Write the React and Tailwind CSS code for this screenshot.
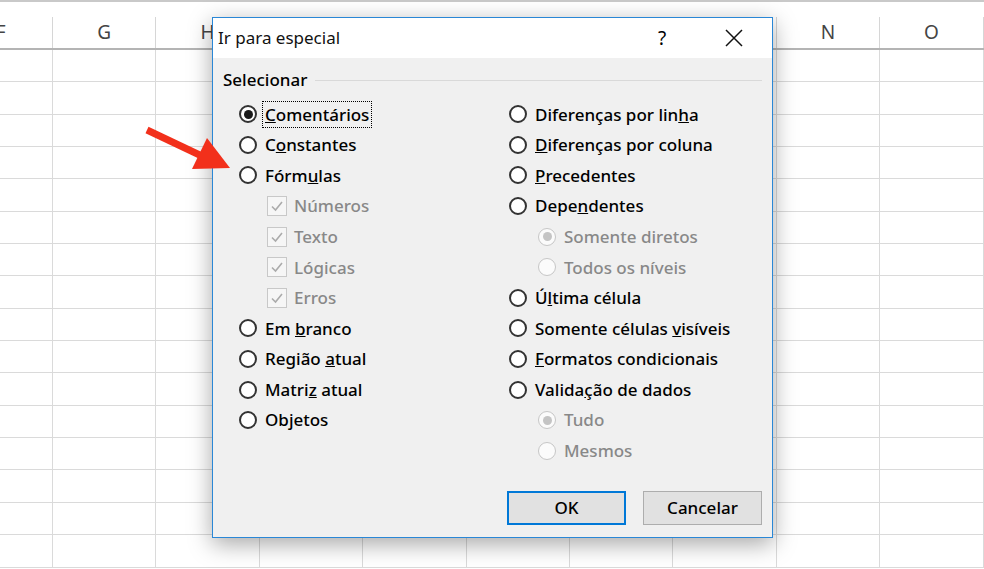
import { Fragment } from "react";

const cols = ["F", "G", "H", "I", "J", "K", "L", "M", "N", "O"];

const leftItems = [
    { kind: "radio", label: <><u>C</u>omentários</>, checked: true, focus: true },
    { kind: "radio", label: <>C<u>o</u>nstantes</> },
    { kind: "radio", label: <>Fórm<u>u</u>las</> },
    { kind: "check", label: "Números" },
    { kind: "check", label: "Texto" },
    { kind: "check", label: "Lógicas" },
    { kind: "check", label: "Erros" },
    { kind: "radio", label: <>Em <u>b</u>ranco</> },
    { kind: "radio", label: <>Região <u>a</u>tual</> },
    { kind: "radio", label: <>Matri<u>z</u> atual</> },
    { kind: "radio", label: <>Ob<u>j</u>etos</> },
];

const rightItems = [
    { kind: "radio", label: <>Diferenças por lin<u>h</u>a</> },
    { kind: "radio", label: <><u>D</u>iferenças por coluna</> },
    { kind: "radio", label: <><u>P</u>recedentes</> },
    { kind: "radio", label: <>Depe<u>n</u>dentes</> },
    { kind: "subradio", label: "Somente diretos", checked: true },
    { kind: "subradio", label: "Todos os níveis" },
    { kind: "radio", label: <>Ú<u>l</u>tima célula</> },
    { kind: "radio", label: <>Somente células <u>v</u>isíveis</> },
    { kind: "radio", label: <><u>F</u>ormatos condicionais</> },
    { kind: "radio", label: <>Valida<u>ç</u>ão de dados</> },
    { kind: "subradio", label: "Tudo", checked: true },
    { kind: "subradio", label: "Mesmos" },
];

const Radio = ({ checked, disabled }) => (
    <span
        className={
            disabled
                ? "w-[18px] h-[18px] rounded-full border border-[#c6c6c6] bg-[#fbfbfb] flex items-center justify-center shrink-0"
                : "w-[18px] h-[18px] rounded-full border-2 border-[#333333] bg-white flex items-center justify-center shrink-0"
        }
    >
        {checked && (
            <span className={disabled ? "w-[9px] h-[9px] rounded-full bg-[#c4c4c4]" : "w-[9px] h-[9px] rounded-full bg-[#1a1a1a]"} />
        )}
    </span>
);

const Check = () => (
    <span className="w-[20px] h-[20px] border border-[#c8c8c8] bg-[#f6f6f6] flex items-center justify-center shrink-0">
        <svg width="14" height="14" viewBox="0 0 14 14">
            <path d="M2 7.5 L5.5 11 L12 3" fill="none" stroke="#ababab" strokeWidth="1.6" />
        </svg>
    </span>
);

const Option = ({ item }) => {
    if (item.kind === "check") {
        return (
            <div className="h-[30.6px] flex items-center pl-[28px]">
                <Check />
                <span className="ml-[7px] text-[#888888]">{item.label}</span>
            </div>
        );
    }
    if (item.kind === "subradio") {
        return (
            <div className="h-[30.6px] flex items-center pl-[29px]">
                <Radio checked={item.checked} disabled />
                <span className="ml-[8px] text-[#888888]">{item.label}</span>
            </div>
        );
    }
    return (
        <div className="h-[30.6px] flex items-center">
            <Radio checked={item.checked} />
            <span
                className={
                    item.focus
                        ? "ml-[5px] h-[27px] px-[2px] flex items-center border border-dotted border-black"
                        : "ml-[5px] h-[27px] px-[2px] flex items-center border border-transparent"
                }
            >
                <span>{item.label}</span>
            </span>
        </div>
    );
};

const App = () => {
    return (
        <div className="relative w-[984px] h-[569px] overflow-hidden bg-white font-['Noto_Sans',sans-serif] text-black">
            {/* sheet behind */}
            <div className="h-[2px] bg-[#c9c9c9]" />
            <div className="h-[15px]" />
            <div className="flex ml-[-50.4px] h-[33px] border-b-2 border-[#b4b4b4]">
                {cols.map(c => (
                    <div key={c} className="w-[103.4px] shrink-0 border-r border-[#d6d6d6] flex items-center justify-center text-[19px] text-[#444444]">
                        {c}
                    </div>
                ))}
            </div>
            {Array.from({ length: 16 }).map((_, r) => (
                <div key={r} className="flex ml-[-50.4px] h-[32.35px] border-b border-[#dadada]">
                    {cols.map(c => (
                        <div key={c} className="w-[103.4px] shrink-0 border-r border-[#dadada]" />
                    ))}
                </div>
            ))}

            {/* dialog */}
            <div className="absolute left-[212px] top-[17px] w-[561px] h-[521px] border border-[#2a87d6] bg-[#f0f0f0] flex flex-col shadow-[0_6px_22px_rgba(0,0,0,0.35)] text-[17px] font-medium">
                <div className="h-[40px] bg-white flex items-center shrink-0">
                    <span className="pl-[5px] text-[17px] font-normal text-[#111111]">Ir para especial</span>
                    <div className="ml-auto flex h-full">
                        <div className="w-[72px] flex items-center justify-center text-[19px] font-normal">?</div>
                        <div className="w-[72px] flex items-center justify-center">
                            <svg width="18" height="18" viewBox="0 0 18 18">
                                <path d="M1 1 L17 17 M17 1 L1 17" stroke="#111" strokeWidth="1.5" />
                            </svg>
                        </div>
                    </div>
                    <div className="w-[2px]" />
                </div>

                <div className="flex-1 flex flex-col px-[10px] pb-[12px]">
                    <div className="mt-[8px] h-[28px] flex items-center">
                        <span>Selecionar</span>
                        <div className="flex-1 ml-[8px] h-px bg-[#d9d9d9]" />
                    </div>

                    <div className="mt-[5px] grid grid-cols-[270px_1fr]">
                        <div className="pl-[16px] flex flex-col">
                            {leftItems.map((it, i) => (
                                <Fragment key={i}>
                                    <Option item={it} />
                                </Fragment>
                            ))}
                        </div>
                        <div className="pl-[16px] flex flex-col">
                            {rightItems.map((it, i) => (
                                <Fragment key={i}>
                                    <Option item={it} />
                                </Fragment>
                            ))}
                        </div>
                    </div>

                    <div className="mt-auto flex justify-end gap-[17px]">
                        <button className="w-[119px] h-[34px] border-2 border-[#0078d7] bg-[#e1e1e1] flex items-center justify-center">OK</button>
                        <button className="w-[119px] h-[34px] border border-[#adadad] bg-[#e1e1e1] flex items-center justify-center">Cancelar</button>
                    </div>
                </div>
            </div>

            {/* red arrow */}
            <svg className="absolute left-[140px] top-[120px]" width="96" height="56" viewBox="0 0 96 56">
                <line x1="7" y1="10" x2="66" y2="38" stroke="#f2301b" strokeWidth="7" />
                <polygon points="67,18 52,49 90,48" fill="#f2301b" />
            </svg>
        </div>
    );
};

export default App;
